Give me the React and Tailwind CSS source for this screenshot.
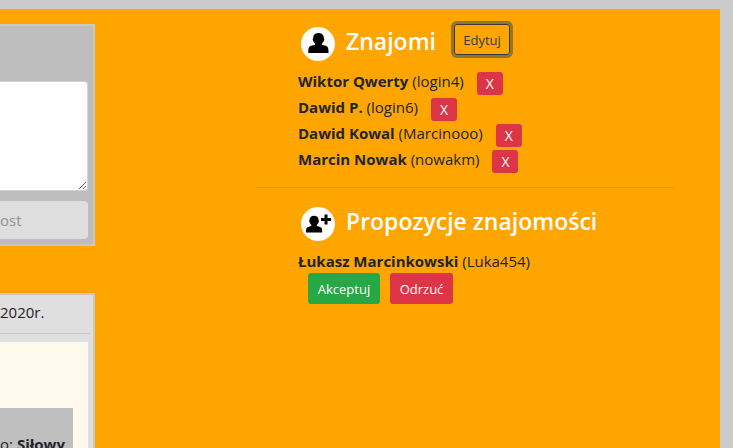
import React from 'react';

const friends = [
  { name: 'Wiktor Qwerty', login: 'login4' },
  { name: 'Dawid P.', login: 'login6' },
  { name: 'Dawid Kowal', login: 'Marcinooo' },
  { name: 'Marcin Nowak', login: 'nowakm' },
];

function PersonIcon() {
  return (
    <svg className="size-[34px] shrink-0" viewBox="0 0 34 34" aria-hidden="true">
      <circle cx="17" cy="17" r="17" fill="#fff" />
      <path d="M17.500 6c3.600 0 5.300 2.200 5.300 5 0 .6.500.8.500 1.700 0 .8-.6 1.200-.8 1.900-.4 1-1 1.700-1.600 2.200v1c2 .6 4.500.8 5.500 2 1 1.200 1.100 3 1.100 6.200H7.300c0-3.200.1-5 1.100-6.200 1-1.200 3.700-1.400 5.700-2v-1c-.6-.5-1.200-1.200-1.600-2.200-.2-.7-.8-1.100-.8-1.900 0-.9.500-1.100.5-1.700C12.200 8.200 13.900 6 17.500 6z" />
    </svg>
  );
}

function AddPersonIcon() {
  return (
    <svg className="size-[34px] shrink-0" viewBox="0 0 34 34" aria-hidden="true">
      <circle cx="17" cy="17" r="17" fill="#fff" />
      <path d="M13 8.800c3 0 4.700 2 4.700 4.400 0 .5.300.8.300 1.400 0 .7-.6 1-.8 1.500-.3.900-.8 1.400-1.300 1.900v.9c1.500.5 3.600.7 4.500 1.800.7.900.8 2.400.8 4.900H5c0-2.500.1-4 .8-4.900.9-1.100 3-1.300 4.500-1.800V18c-.5-.5-1-1-1.300-1.900-.2-.5-.8-.8-.8-1.500 0-.6.3-.9.3-1.400 0-2.400 1.500-4.400 4.500-4.400z" />
      <path d="M23.500 7.500h3v3.500h3.500v3h-3.500v3.500h-3V14H20v-3h3.500z" />
    </svg>
  );
}

function Heading({ icon, children }) {
  return (
    <div className="flex items-start gap-[11px]">
      {icon}
      <h2 className="text-[23px] leading-7 font-semibold whitespace-nowrap text-white">{children}</h2>
    </div>
  );
}

function Person({ name, login }) {
  return (
    <span className="whitespace-nowrap">
      <strong className="font-bold">{name}</strong> ({login})
    </span>
  );
}

export default function App() {
  return (
    <div className="h-screen overflow-hidden bg-[#cbcbcb] pt-[9px] pr-[13px] font-['Open_Sans','Noto_Sans',sans-serif] text-[15px] leading-6 text-[#212529]">
      <main className="flex min-h-full bg-[#ffa500]">
        <div className="flex w-[95px] shrink-0 flex-col gap-[47px] pt-[15px]">
          <form className="flex flex-col gap-2.5 border-y-2 border-r-2 border-[#c8c8c8] bg-[#bdbdbd] pt-[55px] pr-[5px] pb-[5px]">
            <textarea
              aria-label="Post"
              className="block h-[110px] w-full resize rounded-r border border-l-0 border-[#ced4da] bg-white"
            />
            <button
              type="button"
              disabled
              className="h-[38px] rounded-r bg-[#dedede] text-left text-[#929292]"
            >
              ost
            </button>
          </form>
          <article className="flex flex-1 flex-col border-t-2 border-r-2 border-[#c8c8c8] bg-[#dfdfdf]">
            <p className="mr-[3px] h-[39px] border-b border-[#c6c6c6] pt-[5px]">2020r.</p>
            <div className="mt-2 mr-[5px] flex flex-1 flex-col bg-[#fff8ec] pt-[66px] pr-[15px]">
              <p className="flex-1 bg-[#bfbfbf] pt-6 pr-3 text-right whitespace-nowrap">
                o: <strong className="font-bold">Siłowy</strong>
              </p>
            </div>
          </article>
        </div>
        <section className="mr-[45px] ml-[161px] min-w-0 flex-1 pt-3.5">
          <div className="flex items-start gap-[18px] pl-[45px]">
            <div className="pt-1">
              <Heading icon={<PersonIcon />}>Znajomi</Heading>
            </div>
            <button
              type="button"
              className="mt-px h-[31px] w-14 rounded-[3px] border border-[#343a40] text-[13px] text-[#343a40] ring-3 ring-[#997222]"
            >
              Edytuj
            </button>
          </div>
          <ul className="mt-2 flex flex-col pl-[42px]">
            {friends.map((friend) => (
              <li key={friend.login} className="flex items-start gap-[13px]">
                <Person {...friend} />
                <button
                  type="button"
                  aria-label={`Usuń ${friend.name}`}
                  className="mt-[3px] h-[23px] w-[26px] rounded-[3px] bg-[#dc3545] text-sm text-white"
                >
                  X
                </button>
              </li>
            ))}
          </ul>
          <hr className="mt-3.5 border-[#e69500]" />
          <div className="mt-[19px] pl-[45px]">
            <Heading icon={<AddPersonIcon />}>Propozycje znajomości</Heading>
          </div>
          <div className="mt-2 pl-[42px]">
            <Person name="Łukasz Marcinkowski" login="Luka454" />
            <div className="flex gap-2.5 pl-2.5">
              <button type="button" className="h-[31px] w-[72px] rounded-[3px] bg-[#28a745] text-[13px] text-white">
                Akceptuj
              </button>
              <button type="button" className="h-[31px] w-[63px] rounded-[3px] bg-[#dc3545] text-[13px] text-white">
                Odrzuć
              </button>
            </div>
          </div>
        </section>
      </main>
    </div>
  );
}
